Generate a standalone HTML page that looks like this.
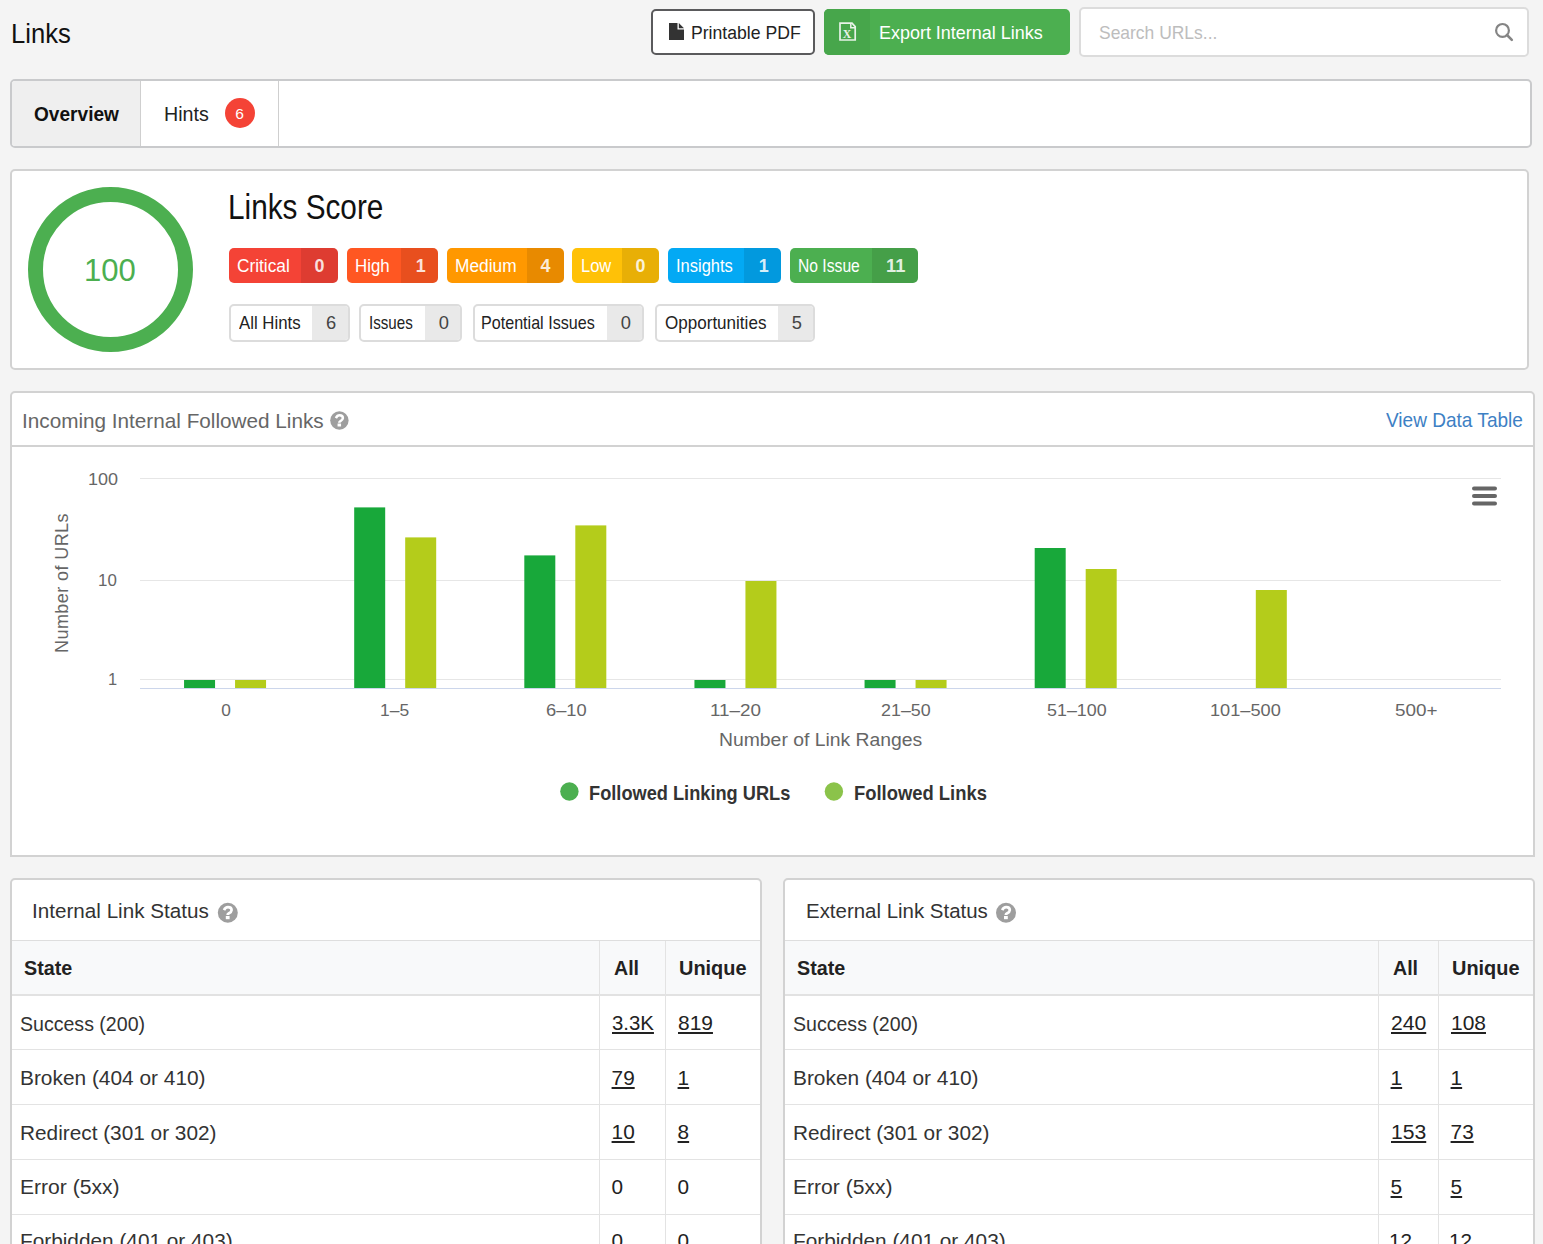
<!DOCTYPE html>
<html><head><meta charset="utf-8"><style>
html,body{margin:0;padding:0;}
body{width:1543px;height:1244px;overflow:hidden;background:#f4f4f4;position:relative;font-family:"Liberation Sans",sans-serif;}
.b{position:absolute;}
.t{position:absolute;line-height:1;white-space:nowrap;transform-origin:0 0;}
svg{position:absolute;left:0;top:0;}
</style></head><body>
<div class="b" style="left:651px;top:9px;width:164px;height:46px;box-sizing:border-box;border:2px solid #5a5a5c;border-radius:5px;background:#fff;"></div><div class="b" style="left:824px;top:9px;width:246px;height:46px;border-radius:5px;background:#4caf50;"></div><div class="b" style="left:824px;top:9px;width:46px;height:46px;border-radius:5px 0 0 5px;background:#47a64b;"></div><div class="b" style="left:1079px;top:7px;width:450px;height:50px;box-sizing:border-box;border:2px solid #dcdcdc;border-radius:5px;background:#fff;"></div><div class="b" style="left:10px;top:79px;width:1522px;height:69px;box-sizing:border-box;border:2px solid #c9cacc;border-radius:5px;background:#fff;overflow:hidden;"></div><div class="b" style="left:12px;top:81px;width:128px;height:65px;background:#efefef;border-radius:3px 0 0 3px;"></div><div class="b" style="left:140px;top:81px;width:1px;height:65px;background:#cfcfcf;"></div><div class="b" style="left:278px;top:81px;width:1px;height:65px;background:#cfcfcf;"></div><div class="b" style="left:225px;top:98px;width:30px;height:30px;border-radius:50%;background:#f44336;"></div><div class="b" style="left:10px;top:169px;width:1519px;height:201px;box-sizing:border-box;border:2px solid #d2d2d2;border-radius:5px;background:#fff;"></div><div class="b" style="left:229px;top:248px;width:109px;height:35px;border-radius:5px;background:#f44336;overflow:hidden;"></div><div class="b" style="left:301px;top:248px;width:37px;height:35px;border-radius:0 5px 5px 0;background:rgba(0,0,0,0.09);"></div><div class="b" style="left:347px;top:248px;width:91px;height:35px;border-radius:5px;background:#ff5722;overflow:hidden;"></div><div class="b" style="left:401px;top:248px;width:37px;height:35px;border-radius:0 5px 5px 0;background:rgba(0,0,0,0.09);"></div><div class="b" style="left:447px;top:248px;width:117px;height:35px;border-radius:5px;background:#ff9800;overflow:hidden;"></div><div class="b" style="left:527px;top:248px;width:37px;height:35px;border-radius:0 5px 5px 0;background:rgba(0,0,0,0.09);"></div><div class="b" style="left:572px;top:248px;width:87px;height:35px;border-radius:5px;background:#ffc107;overflow:hidden;"></div><div class="b" style="left:622px;top:248px;width:37px;height:35px;border-radius:0 5px 5px 0;background:rgba(0,0,0,0.09);"></div><div class="b" style="left:668px;top:248px;width:113px;height:35px;border-radius:5px;background:#03a9f4;overflow:hidden;"></div><div class="b" style="left:744px;top:248px;width:37px;height:35px;border-radius:0 5px 5px 0;background:rgba(0,0,0,0.09);"></div><div class="b" style="left:790px;top:248px;width:128px;height:35px;border-radius:5px;background:#4caf50;overflow:hidden;"></div><div class="b" style="left:872px;top:248px;width:46px;height:35px;border-radius:0 5px 5px 0;background:rgba(0,0,0,0.09);"></div><div class="b" style="left:229px;top:304px;width:121px;height:38px;box-sizing:border-box;border:2px solid #dcdcdc;border-radius:5px;background:#fff;overflow:hidden;"></div><div class="b" style="left:312px;top:306px;width:36px;height:34px;background:#e9e9e9;border-radius:0 3px 3px 0;"></div><div class="b" style="left:359px;top:304px;width:103px;height:38px;box-sizing:border-box;border:2px solid #dcdcdc;border-radius:5px;background:#fff;overflow:hidden;"></div><div class="b" style="left:425px;top:306px;width:35px;height:34px;background:#e9e9e9;border-radius:0 3px 3px 0;"></div><div class="b" style="left:472.5px;top:304px;width:171.5px;height:38px;box-sizing:border-box;border:2px solid #dcdcdc;border-radius:5px;background:#fff;overflow:hidden;"></div><div class="b" style="left:607px;top:306px;width:35px;height:34px;background:#e9e9e9;border-radius:0 3px 3px 0;"></div><div class="b" style="left:654.7px;top:304px;width:160.29999999999995px;height:38px;box-sizing:border-box;border:2px solid #dcdcdc;border-radius:5px;background:#fff;overflow:hidden;"></div><div class="b" style="left:777.7px;top:306px;width:35.299999999999955px;height:34px;background:#e9e9e9;border-radius:0 3px 3px 0;"></div><div class="b" style="left:10px;top:391px;width:1525px;height:466px;box-sizing:border-box;border:2px solid #d2d2d2;border-radius:5px 5px 0 0;background:#fff;"></div><div class="b" style="left:12px;top:445px;width:1521px;height:2px;background:#d2d2d2;"></div><div class="b" style="left:10px;top:878px;width:752px;height:400px;box-sizing:border-box;border:2px solid #d2d2d2;border-radius:5px;background:#fff;"></div><div class="b" style="left:12px;top:940px;width:748px;height:55px;background:#f8f9fa;"></div><div class="b" style="left:12px;top:940px;width:748px;height:1px;background:#dedede;"></div><div class="b" style="left:12px;top:994px;width:748px;height:2px;background:#e2e2e2;"></div><div class="b" style="left:12px;top:1049px;width:748px;height:1px;background:#e3e3e3;"></div><div class="b" style="left:12px;top:1104px;width:748px;height:1px;background:#e3e3e3;"></div><div class="b" style="left:12px;top:1159px;width:748px;height:1px;background:#e3e3e3;"></div><div class="b" style="left:12px;top:1214px;width:748px;height:1px;background:#e3e3e3;"></div><div class="b" style="left:599px;top:941px;width:1px;height:320px;background:#e3e3e3;"></div><div class="b" style="left:665px;top:941px;width:1px;height:320px;background:#e3e3e3;"></div><div class="b" style="left:783px;top:878px;width:752px;height:400px;box-sizing:border-box;border:2px solid #d2d2d2;border-radius:5px;background:#fff;"></div><div class="b" style="left:785px;top:940px;width:748px;height:55px;background:#f8f9fa;"></div><div class="b" style="left:785px;top:940px;width:748px;height:1px;background:#dedede;"></div><div class="b" style="left:785px;top:994px;width:748px;height:2px;background:#e2e2e2;"></div><div class="b" style="left:785px;top:1049px;width:748px;height:1px;background:#e3e3e3;"></div><div class="b" style="left:785px;top:1104px;width:748px;height:1px;background:#e3e3e3;"></div><div class="b" style="left:785px;top:1159px;width:748px;height:1px;background:#e3e3e3;"></div><div class="b" style="left:785px;top:1214px;width:748px;height:1px;background:#e3e3e3;"></div><div class="b" style="left:1378px;top:941px;width:1px;height:320px;background:#e3e3e3;"></div><div class="b" style="left:1438px;top:941px;width:1px;height:320px;background:#e3e3e3;"></div>
<svg width="1543" height="1244" viewBox="0 0 1543 1244"><circle cx="110.5" cy="269.5" r="75" fill="none" stroke="#4caf50" stroke-width="15"/><line x1="140" x2="1501" y1="478.5" y2="478.5" stroke="#e6e6e6" stroke-width="1"/><line x1="140" x2="1501" y1="580.5" y2="580.5" stroke="#e6e6e6" stroke-width="1"/><line x1="140" x2="1501" y1="679.5" y2="679.5" stroke="#e6e6e6" stroke-width="1"/><rect x="184.06" y="680" width="31" height="8" fill="#18a83a"/><rect x="235.06" y="680" width="31" height="8" fill="#b4cc1b"/><rect x="354.19" y="507.4" width="31" height="180.60000000000002" fill="#18a83a"/><rect x="405.19" y="537.4" width="31" height="150.60000000000002" fill="#b4cc1b"/><rect x="524.31" y="555.4" width="31" height="132.60000000000002" fill="#18a83a"/><rect x="575.31" y="525.4" width="31" height="162.60000000000002" fill="#b4cc1b"/><rect x="694.44" y="680" width="31" height="8" fill="#18a83a"/><rect x="745.44" y="581" width="31" height="107" fill="#b4cc1b"/><rect x="864.56" y="680" width="31" height="8" fill="#18a83a"/><rect x="915.56" y="680" width="31" height="8" fill="#b4cc1b"/><rect x="1034.69" y="548" width="31" height="140" fill="#18a83a"/><rect x="1085.69" y="569" width="31" height="119" fill="#b4cc1b"/><rect x="1255.81" y="590" width="31" height="98" fill="#b4cc1b"/><line x1="140" x2="1501" y1="688.5" y2="688.5" stroke="#ccd6eb" stroke-width="1"/><line x1="1474" x2="1495" y1="488.5" y2="488.5" stroke="#666" stroke-width="4" stroke-linecap="round"/><line x1="1474" x2="1495" y1="496" y2="496" stroke="#666" stroke-width="4" stroke-linecap="round"/><line x1="1474" x2="1495" y1="503.5" y2="503.5" stroke="#666" stroke-width="4" stroke-linecap="round"/><circle cx="569.4" cy="791.5" r="9.2" fill="#4caf50"/><circle cx="833.9" cy="791.5" r="9.2" fill="#8bc34a"/><circle cx="1502.5" cy="30.4" r="6.4" fill="none" stroke="#858585" stroke-width="2.2"/><line x1="1507" y1="35" x2="1511.8" y2="39.8" stroke="#858585" stroke-width="2.6" stroke-linecap="round"/><path d="M669 23 H677.5 V29.5 H684 V40 H669 Z" fill="#333"/><path d="M678.8 23 L684 28.2 H678.8 Z" fill="#333"/><path d="M840 23.2 H852 L855.2 26.6 V40 H840 Z" fill="none" stroke="#e8f3e8" stroke-width="1.7"/><path d="M850.8 23.2 V27.8 H855.2" fill="none" stroke="#e8f3e8" stroke-width="1.5"/><text x="847" y="38" font-family="Liberation Serif" font-size="11.8" font-weight="bold" fill="#e8f3e8" text-anchor="middle">X</text><circle cx="339.4" cy="420.5" r="9.2" fill="#9e9e9e"/><path d="M335.90 418.11 Q337.19 415.35 339.58 415.35 Q342.90 415.35 342.90 418.11 Q342.71 419.95 340.50 421.05 Q339.22 421.70 339.22 422.71" fill="none" stroke="#fff" stroke-width="2.48"/><rect x="337.56" y="423.54" width="3.50" height="2.94" fill="#fff"/><circle cx="227.8" cy="912.7" r="10" fill="#9e9e9e"/><path d="M224.00 910.10 Q225.40 907.10 228.00 907.10 Q231.60 907.10 231.60 910.10 Q231.40 912.10 229.00 913.30 Q227.60 914.00 227.60 915.10" fill="none" stroke="#fff" stroke-width="2.70"/><rect x="225.80" y="916.00" width="3.80" height="3.20" fill="#fff"/><circle cx="1006" cy="912.7" r="10" fill="#9e9e9e"/><path d="M1002.20 910.10 Q1003.60 907.10 1006.20 907.10 Q1009.80 907.10 1009.80 910.10 Q1009.60 912.10 1007.20 913.30 Q1005.80 914.00 1005.80 915.10" fill="none" stroke="#fff" stroke-width="2.70"/><rect x="1004.00" y="916.00" width="3.80" height="3.20" fill="#fff"/></svg>
<div class="t" style="left:11.02px;top:20.46px;font-size:27.18px;color:#111;transform:scaleX(0.9426);">Links</div><div class="t" style="left:691.00px;top:23.64px;font-size:18.46px;color:#222;transform:scaleX(0.9555);">Printable PDF</div><div class="t" style="left:879.00px;top:23.64px;font-size:18.46px;color:#fff;transform:scaleX(0.9734);">Export Internal Links</div><div class="t" style="left:1099.00px;top:22.61px;font-size:19.04px;color:#bdbdbd;transform:scaleX(0.9171);">Search URLs...</div><div class="t" style="left:33.82px;top:103.52px;font-size:20.35px;color:#111;transform:scaleX(0.9389);font-weight:bold;">Overview</div><div class="t" style="left:164.00px;top:104.93px;font-size:19.91px;color:#222;transform:scaleX(0.9876);">Hints</div><div class="t" style="left:235.28px;top:105.83px;font-size:15.55px;color:#fff;">6</div><div class="t" style="left:84.42px;top:255.09px;font-size:31.54px;color:#4caf50;transform:scaleX(0.9865);">100</div><div class="t" style="left:228.20px;top:189.82px;font-size:34.45px;color:#111;transform:scaleX(0.8634);">Links Score</div><div class="t" style="left:236.80px;top:256.92px;font-size:18.75px;color:#fff;transform:scaleX(0.9215);">Critical</div><div class="t" style="left:314.54px;top:257.66px;font-size:17.88px;color:rgba(255,255,255,0.85);font-weight:bold;">0</div><div class="t" style="left:355.00px;top:256.92px;font-size:18.75px;color:#fff;transform:scaleX(0.8971);">High</div><div class="t" style="left:415.80px;top:257.66px;font-size:17.88px;color:rgba(255,255,255,0.85);font-weight:bold;">1</div><div class="t" style="left:454.50px;top:256.92px;font-size:18.75px;color:#fff;transform:scaleX(0.9236);">Medium</div><div class="t" style="left:540.58px;top:257.66px;font-size:17.88px;color:rgba(255,255,255,0.85);font-weight:bold;">4</div><div class="t" style="left:580.50px;top:256.92px;font-size:18.75px;color:#fff;transform:scaleX(0.8797);">Low</div><div class="t" style="left:635.56px;top:257.66px;font-size:17.88px;color:rgba(255,255,255,0.85);font-weight:bold;">0</div><div class="t" style="left:676.00px;top:256.92px;font-size:18.75px;color:#fff;transform:scaleX(0.8791);">Insights</div><div class="t" style="left:758.78px;top:257.66px;font-size:17.88px;color:rgba(255,255,255,0.85);font-weight:bold;">1</div><div class="t" style="left:798.00px;top:256.92px;font-size:18.75px;color:#fff;transform:scaleX(0.8353);">No Issue</div><div class="t" style="left:885.50px;top:257.66px;font-size:17.88px;color:rgba(255,255,255,0.85);transform:scaleX(1.0224);font-weight:bold;">11</div><div class="t" style="left:238.56px;top:314.29px;font-size:18.31px;color:#222;transform:scaleX(0.9194);">All Hints</div><div class="t" style="left:326.04px;top:314.29px;font-size:18.31px;color:#444;">6</div><div class="t" style="left:369.24px;top:314.29px;font-size:18.31px;color:#222;transform:scaleX(0.8279);">Issues</div><div class="t" style="left:438.80px;top:314.29px;font-size:18.31px;color:#444;">0</div><div class="t" style="left:481.48px;top:314.29px;font-size:18.31px;color:#222;transform:scaleX(0.8803);">Potential Issues</div><div class="t" style="left:620.80px;top:314.29px;font-size:18.31px;color:#444;">0</div><div class="t" style="left:664.58px;top:314.29px;font-size:18.31px;color:#222;transform:scaleX(0.9318);">Opportunities</div><div class="t" style="left:791.80px;top:314.29px;font-size:18.31px;color:#444;">5</div><div class="t" style="left:22.02px;top:410.66px;font-size:20.49px;color:#666;transform:scaleX(1.0113);">Incoming Internal Followed Links</div><div class="t" style="left:1386.32px;top:410.15px;font-size:20.20px;color:#3d80c4;transform:scaleX(0.9431);">View Data Table</div><div class="t" style="left:32.00px;top:899.63px;font-size:21.08px;color:#333;transform:scaleX(0.9799);">Internal Link Status</div><div class="t" style="left:24.32px;top:958.40px;font-size:20.49px;color:#222;transform:scaleX(0.9627);font-weight:bold;">State</div><div class="t" style="left:613.56px;top:958.40px;font-size:20.49px;color:#222;transform:scaleX(0.9560);font-weight:bold;">All</div><div class="t" style="left:678.76px;top:958.40px;font-size:20.49px;color:#222;transform:scaleX(0.9724);font-weight:bold;">Unique</div><div class="t" style="left:20.24px;top:1013.82px;font-size:20.64px;color:#333;transform:scaleX(0.9484);">Success (200)</div><div class="t" style="left:611.58px;top:1012.90px;font-size:20.78px;color:#222;transform:scaleX(0.9819);text-decoration:underline;">3.3K</div><div class="t" style="left:677.58px;top:1012.90px;font-size:20.78px;color:#222;transform:scaleX(1.0084);text-decoration:underline;">819</div><div class="t" style="left:20.24px;top:1067.78px;font-size:20.64px;color:#333;transform:scaleX(1.0115);">Broken (404 or 410)</div><div class="t" style="left:611.58px;top:1067.50px;font-size:20.78px;color:#222;text-decoration:underline;">79</div><div class="t" style="left:677.58px;top:1067.50px;font-size:20.78px;color:#222;text-decoration:underline;">1</div><div class="t" style="left:20.24px;top:1122.54px;font-size:20.64px;color:#333;transform:scaleX(1.0081);">Redirect (301 or 302)</div><div class="t" style="left:611.58px;top:1122.10px;font-size:20.78px;color:#222;text-decoration:underline;">10</div><div class="t" style="left:677.58px;top:1122.10px;font-size:20.78px;color:#222;text-decoration:underline;">8</div><div class="t" style="left:20.24px;top:1177.30px;font-size:20.64px;color:#333;transform:scaleX(1.0220);">Error (5xx)</div><div class="t" style="left:611.58px;top:1177.18px;font-size:20.78px;color:#222;">0</div><div class="t" style="left:677.58px;top:1177.18px;font-size:20.78px;color:#222;">0</div><div class="t" style="left:20.24px;top:1231.42px;font-size:20.64px;color:#333;transform:scaleX(1.0081);">Forbidden (401 or 403)</div><div class="t" style="left:611.58px;top:1231.30px;font-size:20.78px;color:#222;">0</div><div class="t" style="left:677.58px;top:1231.30px;font-size:20.78px;color:#222;">0</div><div class="t" style="left:806.02px;top:899.63px;font-size:21.08px;color:#333;transform:scaleX(0.9699);">External Link Status</div><div class="t" style="left:797.32px;top:958.40px;font-size:20.49px;color:#222;transform:scaleX(0.9627);font-weight:bold;">State</div><div class="t" style="left:1392.56px;top:958.40px;font-size:20.49px;color:#222;transform:scaleX(0.9560);font-weight:bold;">All</div><div class="t" style="left:1451.76px;top:958.40px;font-size:20.49px;color:#222;transform:scaleX(0.9724);font-weight:bold;">Unique</div><div class="t" style="left:793.24px;top:1013.82px;font-size:20.64px;color:#333;transform:scaleX(0.9484);">Success (200)</div><div class="t" style="left:1390.58px;top:1012.90px;font-size:20.78px;color:#222;transform:scaleX(1.0165);text-decoration:underline;">240</div><div class="t" style="left:1450.58px;top:1012.90px;font-size:20.78px;color:#222;transform:scaleX(1.0095);text-decoration:underline;">108</div><div class="t" style="left:793.24px;top:1067.78px;font-size:20.64px;color:#333;transform:scaleX(1.0115);">Broken (404 or 410)</div><div class="t" style="left:1390.58px;top:1067.50px;font-size:20.78px;color:#222;text-decoration:underline;">1</div><div class="t" style="left:1450.58px;top:1067.50px;font-size:20.78px;color:#222;text-decoration:underline;">1</div><div class="t" style="left:793.24px;top:1122.54px;font-size:20.64px;color:#333;transform:scaleX(1.0081);">Redirect (301 or 302)</div><div class="t" style="left:1390.58px;top:1122.10px;font-size:20.78px;color:#222;transform:scaleX(1.0165);text-decoration:underline;">153</div><div class="t" style="left:1450.58px;top:1122.10px;font-size:20.78px;color:#222;text-decoration:underline;">73</div><div class="t" style="left:793.24px;top:1177.30px;font-size:20.64px;color:#333;transform:scaleX(1.0220);">Error (5xx)</div><div class="t" style="left:1390.58px;top:1176.70px;font-size:20.78px;color:#222;text-decoration:underline;">5</div><div class="t" style="left:1450.58px;top:1176.70px;font-size:20.78px;color:#222;text-decoration:underline;">5</div><div class="t" style="left:793.24px;top:1231.42px;font-size:20.64px;color:#333;transform:scaleX(1.0081);">Forbidden (401 or 403)</div><div class="t" style="left:1388.98px;top:1231.30px;font-size:20.78px;color:#222;text-decoration:underline;">12</div><div class="t" style="left:1448.98px;top:1231.30px;font-size:20.78px;color:#222;text-decoration:underline;">12</div><div class="t" style="left:87.52px;top:471.09px;font-size:16.42px;color:#666;transform:scaleX(1.0980);">100</div><div class="t" style="left:98.00px;top:571.57px;font-size:16.42px;color:#666;transform:scaleX(1.0293);">10</div><div class="t" style="left:108.00px;top:670.85px;font-size:16.42px;color:#666;">1</div><div class="t" style="left:221.32px;top:701.87px;font-size:17.30px;color:#666;">0</div><div class="t" style="left:380.48px;top:701.87px;font-size:17.30px;color:#666;transform:scaleX(1.0080);">1–5</div><div class="t" style="left:545.82px;top:701.87px;font-size:17.30px;color:#666;transform:scaleX(1.0596);">6–10</div><div class="t" style="left:709.98px;top:701.87px;font-size:17.30px;color:#666;transform:scaleX(1.0909);">11–20</div><div class="t" style="left:881.04px;top:701.87px;font-size:17.30px;color:#666;transform:scaleX(1.0345);">21–50</div><div class="t" style="left:1046.58px;top:701.87px;font-size:17.30px;color:#666;transform:scaleX(1.0350);">51–100</div><div class="t" style="left:1210.00px;top:701.87px;font-size:17.30px;color:#666;transform:scaleX(1.0515);">101–500</div><div class="t" style="left:1394.82px;top:701.87px;font-size:17.30px;color:#666;transform:scaleX(1.0916);">500+</div><div class="t" style="left:718.50px;top:730.54px;font-size:18.90px;color:#666;transform:scaleX(1.0243);">Number of Link Ranges</div><div class="t" style="left:589.00px;top:782.96px;font-size:20.78px;color:#333;transform:scaleX(0.8772);font-weight:bold;">Followed Linking URLs</div><div class="t" style="left:853.52px;top:782.96px;font-size:20.78px;color:#333;transform:scaleX(0.8864);font-weight:bold;">Followed Links</div><div class="t" style="left:62px;top:582.6px;font-size:18px;letter-spacing:0.42px;color:#666;transform-origin:50% 50%;transform:translate(-50%,-50%) rotate(-90deg);">Number of URLs</div>
</body></html>
